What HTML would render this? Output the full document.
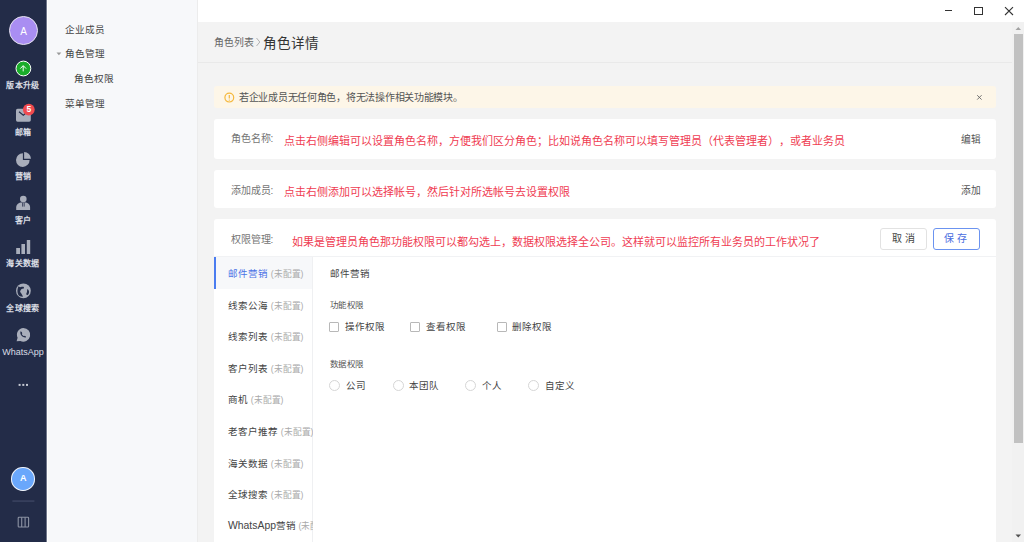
<!DOCTYPE html>
<html lang="zh-CN"><head><meta charset="utf-8">
<style>
*{margin:0;padding:0;box-sizing:border-box}
html,body{text-spacing-trim:space-all;width:1024px;height:542px;overflow:hidden;background:#f3f3f3;font-family:"Liberation Sans",sans-serif;color:#333}
.abs{position:absolute}
#side{left:0;top:0;width:46px;height:542px;background:#232c48}
#menu{left:46px;top:0;width:152px;height:542px;background:linear-gradient(to right,#70778b 0,#70778b 1px,#fff 1px,#fff 2px,#f7f8fa 2px);border-right:1px solid #ececec}
#topbar{left:198px;top:0;width:826px;height:22px;background:#fff}
#header{left:198px;top:22px;width:814px;height:41px;background:#f3f3f3;border-bottom:1px solid #e9e9e9}
.lbl{color:#d9dce4;font-size:8px;font-weight:600;letter-spacing:0.4px;text-align:center;width:46px;left:0;line-height:10px;white-space:nowrap}
.mi{font-size:9.6px;color:#444;line-height:12px;white-space:nowrap}
.card{background:#fff;border-radius:3px;left:214px;width:782px}
.gl{font-size:10px;color:#757575;line-height:12px;white-space:nowrap}
.red{font-size:11px;color:#ef3c52;line-height:14px;white-space:nowrap}
.tab{left:214px;width:99px;height:32px;font-size:9.5px;color:#444;line-height:33px;padding-left:14px;white-space:nowrap;overflow:hidden}
.tab small{font-size:8.7px;color:#aaa}
.cb{width:10px;height:10px;border:1px solid #b8b8b8;border-radius:1px;background:#fff}
.rd{width:11px;height:11px;border:1px solid #d6d6d6;border-radius:50%;background:#fff}
.ct{font-size:9.5px;color:#444;line-height:12px;white-space:nowrap}
</style></head><body>
<div id="side" class="abs"></div>
<div id="menu" class="abs"></div>
<div id="topbar" class="abs"></div>
<div id="header" class="abs"></div>

<!-- sidebar content -->
<svg class="abs" style="left:0;top:0" width="46" height="542" viewBox="0 0 46 542">
<g fill="#a9aebb">
 <!-- upgrade -->
 <circle cx="23.4" cy="68.5" r="7.4" fill="#1aad2a" stroke="#fff" stroke-width="1"/>
 <path d="M20.3 68.6 L23.2 65.6 L26.1 68.6 M23.2 66 V71.4" fill="none" stroke="#fff" stroke-width="0.95"/>
 <!-- mail -->
 <rect x="16" y="108.8" width="14.8" height="12.9" rx="1.6"/>
 <path d="M19 111.8 L23.3 115.2 L27.6 111.8" fill="none" stroke="#232c48" stroke-width="1.1"/>
 <circle cx="28.8" cy="109.6" r="5.9" fill="#f04a4f"/>
 <!-- pie -->
 <path d="M22.9 153.3 A6.8 6.8 0 1 0 29.6 160 L22.9 160 Z"/>
 <path d="M24.1 152 A7 7 0 0 1 31 158.8 L24.1 158.8 Z"/>
 <!-- customer -->
 <circle cx="23.3" cy="199" r="3.3"/>
 <path d="M16.2 210 L16.2 207.5 C16.2 204.5 19 202.6 21.6 202.6 L25 202.6 C27.6 202.6 30.1 204.5 30.1 207.5 L30.1 210 Z"/>
 <path d="M22.6 202.8 L22.6 206.6 M24.2 202.8 L24.2 206.6" stroke="#232c48" stroke-width="0.8"/>
 <!-- bars -->
 <rect x="16.2" y="248" width="3.8" height="6"/>
 <rect x="21.4" y="244" width="3.6" height="10"/>
 <rect x="26.8" y="240" width="3.4" height="14"/>
 <!-- globe -->
 <circle cx="23.4" cy="290.8" r="7.4"/>
 <path d="M18.6 286.2 C19.4 286.9 20 287.3 20.8 287.1 C21.8 286.9 23 286.6 23.9 287.1 L23.9 288.5 C22.8 288.6 21.8 288.6 21.3 289.3 C20.6 290.2 20.2 291 20.1 291.8 C20.4 292.6 21.2 293 21.5 293.7 C22 294.8 22.8 295.6 23 296.8 C21.5 296.8 20.1 296.4 19 295.7 C18.2 294.8 17.7 293.5 17.5 292.2 C17.3 290 17.7 287.8 18.6 286.2 Z" fill="#232c48"/>
 <path d="M27.4 289 C28.4 289.6 29 290.7 29.1 291.9 C29.1 293 28.5 294.2 27.6 295 C27 295 26.3 294.6 26.2 294 C26.4 293.2 27 292.6 27 291.8 C27 290.9 27 289.9 27.4 289 Z" fill="#232c48"/>
 <!-- whatsapp -->
 <path d="M23.3 327.9 A6.9 6.9 0 1 1 20.3 341 L16.6 341.2 L17.6 337.8 A6.9 6.9 0 0 1 23.3 327.9 Z"/>
 <path d="M20.6 331.3 C20 332.6 20.4 334.4 21.6 335.8 C22.8 337.1 24.4 337.8 25.9 337.4 L25.8 336.3 L24.6 335.7 L24 336.2 C23 335.9 22.2 335 21.8 334 L22.3 333.3 L21.7 332 Z" fill="#232c48"/>
</g>
<!-- dots -->
<g fill="#c5c9d3"><rect x="18.6" y="383.9" width="2" height="2"/><rect x="22.3" y="383.9" width="2" height="2"/><rect x="26" y="383.9" width="2" height="2"/></g>
<rect x="12.4" y="500.6" width="22" height="0.9" fill="#4b5371"/>
<g fill="none" stroke="#8c92a3" stroke-width="1.1"><rect x="18.2" y="517.2" width="10.4" height="9.8" rx="0.8"/><path d="M21.7 517.2 V527 M25.1 517.2 V527"/></g>
</svg>
<div class="abs" style="left:23px;top:104px;width:11.6px;height:11.6px;color:#fff;font-size:8.5px;font-weight:bold;line-height:11.6px;text-align:center">5</div>

<div class="abs" style="left:8.8px;top:15.6px;width:29.4px;height:29.4px;border-radius:50%;background:#a98ef2;border:1px solid #e6e3ee;color:#fff;font-size:10px;line-height:30.4px;text-align:center">A</div>
<div class="abs lbl" style="top:81px">版本升级</div>
<div class="abs lbl" style="top:128px">邮箱</div>
<div class="abs lbl" style="top:172px">营销</div>
<div class="abs lbl" style="top:216px">客户</div>
<div class="abs lbl" style="top:259px">海关数据</div>
<div class="abs lbl" style="top:304px">全球搜索</div>
<div class="abs lbl" style="top:347px;font-size:9px;font-weight:normal;letter-spacing:0">WhatsApp</div>
<div class="abs" style="left:11.4px;top:467.2px;width:23.6px;height:23.4px;border-radius:50%;background:#6aa7fb;border:1px solid #f2f5fb;color:#fff;font-size:9px;font-weight:bold;line-height:21.4px;text-align:center">A</div>

<!-- menu -->
<div class="abs mi" style="left:65.3px;top:23.5px">企业成员</div>
<div class="abs mi" style="left:65.3px;top:48px">角色管理</div>
<div class="abs mi" style="left:74px;top:73px">角色权限</div>
<div class="abs mi" style="left:65.3px;top:97.5px">菜单管理</div>

<!-- header -->
<div class="abs" style="left:213.8px;top:36.5px;font-size:9.9px;color:#666;line-height:12px">角色列表</div>
<div class="abs" style="left:263px;top:34.7px;font-size:13.6px;color:#333;line-height:18px">角色详情</div>

<!-- alert -->
<div class="abs" style="left:214px;top:86.4px;width:782px;height:21.7px;background:#fdf6e8;border-radius:3px"></div>
<div class="abs gl" style="left:239px;top:92px;color:#555;font-size:10px;letter-spacing:-0.28px">若企业成员无任何角色，将无法操作相关功能模块。</div>

<!-- cards -->
<div class="abs card" style="top:119px;height:40px"></div>
<div class="abs gl" style="left:230.5px;top:133px">角色名称:</div>
<div class="abs red" style="left:284px;top:134px">点击右侧编辑可以设置角色名称，方便我们区分角色；比如说角色名称可以填写管理员（代表管理者），或者业务员</div>
<div class="abs gl" style="left:960.5px;top:134px;color:#555;font-size:9.7px">编辑</div>

<div class="abs card" style="top:170px;height:38px"></div>
<div class="abs gl" style="left:230.5px;top:184.5px">添加成员:</div>
<div class="abs red" style="left:284px;top:185px">点击右侧添加可以选择帐号，然后针对所选帐号去设置权限</div>
<div class="abs gl" style="left:960.5px;top:184.5px;color:#555;font-size:9.7px">添加</div>

<div class="abs card" style="top:219px;height:323px;border-radius:3px 3px 0 0"></div>
<div class="abs gl" style="left:230.5px;top:233.5px">权限管理:</div>
<div class="abs red" style="left:292px;top:235px">如果是管理员角色那功能权限可以都勾选上，数据权限选择全公司。这样就可以监控所有业务员的工作状况了</div>


<!-- tabs -->
<div class="abs" style="left:214px;top:256px;width:782px;height:1px;background:#f1f2f4"></div>
<div class="abs" style="left:312px;top:257px;width:1px;height:285px;background:#eff0f2"></div>
<div class="abs" style="left:214px;top:257px;width:98px;height:32px;background:#f7f8fa;border-left:2px solid #4a7cf0"></div>
<div class="abs tab" style="top:257px;color:#4a72e6">邮件营销 <small>(未配置)</small></div>
<div class="abs tab" style="top:288.6px">线索公海 <small>(未配置)</small></div>
<div class="abs tab" style="top:320.2px">线索列表 <small>(未配置)</small></div>
<div class="abs tab" style="top:351.8px">客户列表 <small>(未配置)</small></div>
<div class="abs tab" style="top:383.2px">商机 <small>(未配置)</small></div>
<div class="abs tab" style="top:414.6px">老客户推荐 <small>(未配置)</small></div>
<div class="abs tab" style="top:446.6px">海关数据 <small>(未配置)</small></div>
<div class="abs tab" style="top:478.2px">全球搜索 <small>(未配置)</small></div>
<div class="abs tab" style="top:509.2px"><span style="font-size:10.4px">WhatsApp</span>营销 <small>(未配置)</small></div>

<!-- content -->
<div class="abs ct" style="left:329.5px;top:268px">邮件营销</div>
<div class="abs ct" style="left:329.5px;top:298.5px;font-size:8.5px;color:#555;letter-spacing:-0.4px">功能权限</div>
<div class="abs cb" style="left:329px;top:321.5px"></div><div class="abs ct" style="left:345px;top:321px">操作权限</div>
<div class="abs cb" style="left:410px;top:321.5px"></div><div class="abs ct" style="left:425.5px;top:321px">查看权限</div>
<div class="abs cb" style="left:497px;top:321.5px"></div><div class="abs ct" style="left:511.5px;top:321px">删除权限</div>
<div class="abs ct" style="left:329.5px;top:357.5px;font-size:8.5px;color:#555;letter-spacing:-0.4px">数据权限</div>
<div class="abs rd" style="left:329px;top:380px"></div><div class="abs ct" style="left:345.8px;top:379.5px">公司</div>
<div class="abs rd" style="left:393px;top:380px"></div><div class="abs ct" style="left:408.8px;top:379.5px">本团队</div>
<div class="abs rd" style="left:465px;top:380px"></div><div class="abs ct" style="left:482px;top:379.5px">个人</div>
<div class="abs rd" style="left:528px;top:380px"></div><div class="abs ct" style="left:544.6px;top:379.5px">自定义</div>

<!-- buttons -->
<div class="abs" style="left:880px;top:228px;width:47px;height:21.7px;border:1px solid #e2e2e2;border-radius:3px;background:#fff;font-size:10px;color:#444;line-height:20px;text-align:center;letter-spacing:2.7px;padding-left:2.7px">取消</div>
<div class="abs" style="left:932.5px;top:228px;width:47px;height:21.7px;border:1px solid #6b93f0;border-radius:3px;background:#fff;font-size:10px;color:#4a6de0;line-height:20px;text-align:center;letter-spacing:3px;padding-left:2.5px">保存</div>

<!-- scrollbar -->
<div class="abs" style="left:1012px;top:22px;width:12px;height:520px;background:#f1f1f1"></div>
<div class="abs" style="left:1014px;top:34px;width:9px;height:409px;background:#c1c1c1"></div>

<!-- misc icons -->
<svg class="abs" style="left:0;top:0" width="1024" height="542" viewBox="0 0 1024 542">
 <path d="M56.5 52.5 L61.3 52.5 L58.9 55.3 Z" fill="#999"/>
 <path d="M256.5 38 L259.8 42 L256.5 46" fill="none" stroke="#aaa" stroke-width="0.9"/>
 <circle cx="229.3" cy="97.6" r="4.4" fill="none" stroke="#f5b83d" stroke-width="1.2"/>
 <path d="M229.3 95 V98.4" stroke="#f5b83d" stroke-width="1.2"/>
 <circle cx="229.3" cy="100.1" r="0.7" fill="#f5b83d"/>
 <path d="M977.2 95.2 L981.6 99.6 M981.6 95.2 L977.2 99.6" stroke="#666" stroke-width="0.9"/>
 <path d="M945 10.5 H952" stroke="#333" stroke-width="1"/>
 <rect x="974.5" y="7.5" width="8" height="7" fill="none" stroke="#333" stroke-width="1"/>
 <path d="M1005 7.2 L1013 15 M1013 7.2 L1005 15" stroke="#333" stroke-width="1.1"/>
 <path d="M1015.5 30 L1018.3 27 L1021 30 Z" fill="#a3a3a3"/>
 <path d="M1015.5 534.5 L1018.3 537.5 L1021 534.5 Z" fill="#505050"/>
</svg>
</body></html>
